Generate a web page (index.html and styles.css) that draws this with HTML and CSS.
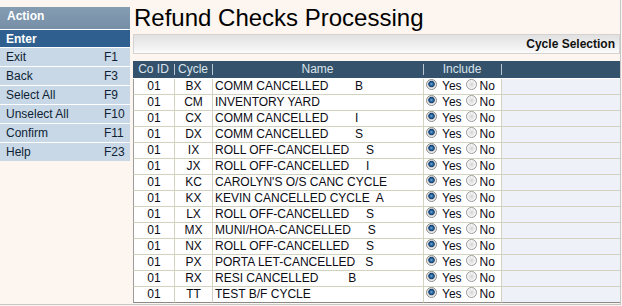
FILE: index.html
```html
<!DOCTYPE html>
<html>
<head>
<meta charset="utf-8">
<title>Refund Checks Processing</title>
<link rel="stylesheet" href="styles.css">
</head>
<body>
<div class="frame">
  <aside class="sidebar">
    <div class="side-title">Action</div>
    <div class="side-enter">Enter</div>
    <ul class="side-list">
      <li class="side-item"><span>Exit</span><span>F1</span></li>
      <li class="side-item"><span>Back</span><span>F3</span></li>
      <li class="side-item"><span>Select All</span><span>F9</span></li>
      <li class="side-item"><span>Unselect All</span><span>F10</span></li>
      <li class="side-item"><span>Confirm</span><span>F11</span></li>
      <li class="side-item"><span>Help</span><span>F23</span></li>
    </ul>
  </aside>
  <main class="main">
    <h1 class="title">Refund Checks Processing</h1>
    <div class="section-bar">Cycle Selection</div>
    <div class="grid">
      <div class="row head"><div class="c">Co ID</div><div class="c">Cycle</div><div class="c">Name</div><div class="c">Include</div><div class="c"></div></div>
      <div class="row data"><div class="c id">01</div><div class="c cy">BX</div><div class="c nm">COMM CANCELLED        B</div><div class="c inc"><input class="radio" type="radio" name="r1" checked><span>Yes</span><input class="radio r2" type="radio" name="r1"><span>No</span></div><div class="c fill"></div></div>
      <div class="row data"><div class="c id">01</div><div class="c cy">CM</div><div class="c nm">INVENTORY YARD</div><div class="c inc"><input class="radio" type="radio" name="r2" checked><span>Yes</span><input class="radio r2" type="radio" name="r2"><span>No</span></div><div class="c fill"></div></div>
      <div class="row data"><div class="c id">01</div><div class="c cy">CX</div><div class="c nm">COMM CANCELLED        I</div><div class="c inc"><input class="radio" type="radio" name="r3" checked><span>Yes</span><input class="radio r2" type="radio" name="r3"><span>No</span></div><div class="c fill"></div></div>
      <div class="row data"><div class="c id">01</div><div class="c cy">DX</div><div class="c nm">COMM CANCELLED        S</div><div class="c inc"><input class="radio" type="radio" name="r4" checked><span>Yes</span><input class="radio r2" type="radio" name="r4"><span>No</span></div><div class="c fill"></div></div>
      <div class="row data"><div class="c id">01</div><div class="c cy">IX</div><div class="c nm">ROLL OFF-CANCELLED     S</div><div class="c inc"><input class="radio" type="radio" name="r5" checked><span>Yes</span><input class="radio r2" type="radio" name="r5"><span>No</span></div><div class="c fill"></div></div>
      <div class="row data"><div class="c id">01</div><div class="c cy">JX</div><div class="c nm">ROLL OFF-CANCELLED     I</div><div class="c inc"><input class="radio" type="radio" name="r6" checked><span>Yes</span><input class="radio r2" type="radio" name="r6"><span>No</span></div><div class="c fill"></div></div>
      <div class="row data"><div class="c id">01</div><div class="c cy">KC</div><div class="c nm">CAROLYN'S O/S CANC CYCLE</div><div class="c inc"><input class="radio" type="radio" name="r7" checked><span>Yes</span><input class="radio r2" type="radio" name="r7"><span>No</span></div><div class="c fill"></div></div>
      <div class="row data"><div class="c id">01</div><div class="c cy">KX</div><div class="c nm">KEVIN CANCELLED CYCLE  A</div><div class="c inc"><input class="radio" type="radio" name="r8" checked><span>Yes</span><input class="radio r2" type="radio" name="r8"><span>No</span></div><div class="c fill"></div></div>
      <div class="row data"><div class="c id">01</div><div class="c cy">LX</div><div class="c nm">ROLL OFF-CANCELLED     S</div><div class="c inc"><input class="radio" type="radio" name="r9" checked><span>Yes</span><input class="radio r2" type="radio" name="r9"><span>No</span></div><div class="c fill"></div></div>
      <div class="row data"><div class="c id">01</div><div class="c cy">MX</div><div class="c nm">MUNI/HOA-CANCELLED     S</div><div class="c inc"><input class="radio" type="radio" name="r10" checked><span>Yes</span><input class="radio r2" type="radio" name="r10"><span>No</span></div><div class="c fill"></div></div>
      <div class="row data"><div class="c id">01</div><div class="c cy">NX</div><div class="c nm">ROLL OFF-CANCELLED     S</div><div class="c inc"><input class="radio" type="radio" name="r11" checked><span>Yes</span><input class="radio r2" type="radio" name="r11"><span>No</span></div><div class="c fill"></div></div>
      <div class="row data"><div class="c id">01</div><div class="c cy">PX</div><div class="c nm">PORTA LET-CANCELLED   S</div><div class="c inc"><input class="radio" type="radio" name="r12" checked><span>Yes</span><input class="radio r2" type="radio" name="r12"><span>No</span></div><div class="c fill"></div></div>
      <div class="row data"><div class="c id">01</div><div class="c cy">RX</div><div class="c nm">RESI CANCELLED         B</div><div class="c inc"><input class="radio" type="radio" name="r13" checked><span>Yes</span><input class="radio r2" type="radio" name="r13"><span>No</span></div><div class="c fill"></div></div>
      <div class="row data last"><div class="c id">01</div><div class="c cy">TT</div><div class="c nm">TEST B/F CYCLE</div><div class="c inc"><input class="radio" type="radio" name="r14" checked><span>Yes</span><input class="radio r2" type="radio" name="r14"><span>No</span></div><div class="c fill"></div></div>
    </div>
  </main>
</div>
</body>
</html>
```

FILE: styles.css
```css
html, body {
  margin: 0;
  padding: 0;
}

body {
  background: #fdf5ef;
  font-family: "Liberation Sans", Arial, sans-serif;
  font-size: 12px;
  color: #0e1a2a;
}

.frame {
  display: flex;
  width: 620px;
  height: 304px;
  border-right: 1px solid #c6c6c6;
  border-bottom: 1px solid #c6c6c6;
}

/* ---------- sidebar ---------- */
.sidebar {
  flex: none;
  width: 130px;
  padding-top: 7px;
}

.side-title {
  height: 22px;
  box-sizing: border-box;
  padding: 2px 0 0 7px;
  line-height: 15px;
  font-weight: bold;
  color: #ffffff;
  background: linear-gradient(#859cb2, #768fa7);
}

.side-enter {
  height: 18px;
  box-sizing: border-box;
  border-top: 1px solid #ffffff;
  padding: 2px 0 0 6px;
  line-height: 15px;
  font-weight: bold;
  color: #ffffff;
  background: #2f5f8e;
}

.side-list {
  list-style: none;
  margin: 0;
  padding: 0;
}

.side-item {
  display: grid;
  grid-template-columns: 98px auto;
  height: 19px;
  box-sizing: border-box;
  border-top: 1px solid #ffffff;
  padding: 1px 0 0 6px;
  line-height: 17px;
  background: #c8d8e6;
  color: #0f1f35;
}

/* ---------- main ---------- */
.main {
  flex: none;
  width: 487px;
  margin-left: 3px;
  padding-top: 4px;
}

.title {
  margin: 0;
  height: 27px;
  padding-left: 1px;
  font-size: 24px;
  line-height: 27px;
  font-weight: normal;
  color: #000000;
}

.section-bar {
  margin-top: 3px;
  height: 20px;
  box-sizing: border-box;
  border: 1px solid #d3d3d3;
  background: linear-gradient(#e1e1e1, #f2f2f2 70%, #fbfbfb);
  padding-right: 4px;
  text-align: right;
  line-height: 18px;
  font-weight: bold;
  color: #111111;
}

.grid {
  margin-top: 7px;
}

.row {
  display: grid;
  grid-template-columns: 41px 38px 211px 78px 119px;
}

.head {
  height: 18px;
  box-sizing: border-box;
  border-bottom: 1px solid #ffffff;
  background: #34526b;
  color: #dbe4ec;
  line-height: 17px;
}

.head .c {
  text-align: center;
}

.head .c + .c {
  background-image: linear-gradient(#b9c7d3, #b9c7d3);
  background-repeat: no-repeat;
  background-position: 0 50%;
  background-size: 1px 11px;
}

.data .c {
  height: 15px;
  line-height: 15px;
  border-bottom: 1px solid #d2d2bf;
  background: #ffffff;
  color: #0c0c14;
}

.data .c + .c {
  border-left: 1px solid #d2d2bf;
}

.data .id {
  border-left: 1px solid #9c9c9c;
  text-align: center;
}

.data .cy {
  text-align: center;
}

.data .nm {
  padding-left: 2px;
  white-space: pre;
}

.data .inc {
  white-space: nowrap;
}

.data .fill {
  background: #eef2f8;
}

.data.last .c {
  border-bottom-color: #8a8a8a;
}

.radio {
  -webkit-appearance: none;
  appearance: none;
  width: 11px;
  height: 11px;
  box-sizing: border-box;
  margin: 0 5px 0 2px;
  padding: 0;
  border: 1px solid #999999;
  border-radius: 50%;
  vertical-align: baseline;
  background: radial-gradient(circle at 50% 50%, #d6d6d6 0, #e8e8e8 2.5px, #fbfbfb 4.5px);
}

.radio:checked {
  border-color: #8a8a8a;
  background: radial-gradient(circle at 50% 45%, #86b6e2 0, #2d68a4 1.4px, #133f6d 2.9px, #b9bec4 3.4px, #e4e4e4 4px, #fafafa 5px);
}

.radio.r2 {
  margin: 0 3px 0 4px;
}
```
